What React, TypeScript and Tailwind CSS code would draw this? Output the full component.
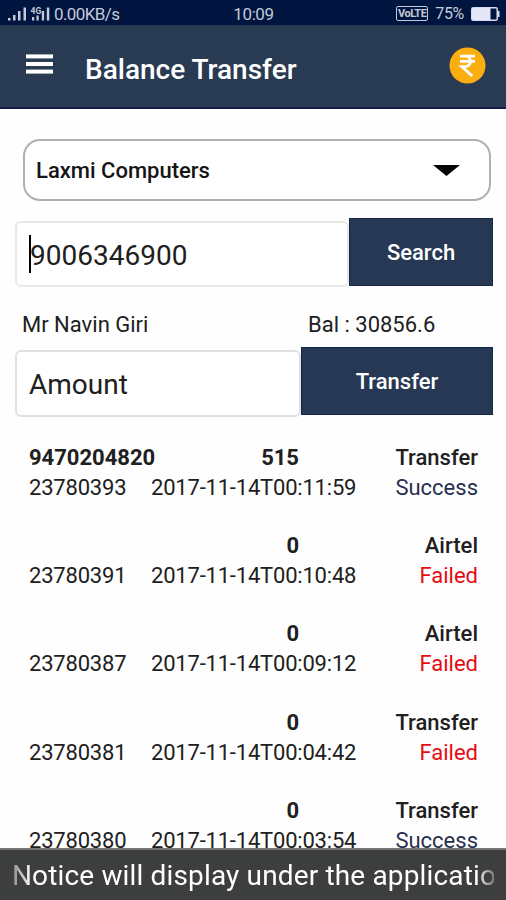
import type { ReactNode } from 'react'

type Entry = {
  id: string
  number?: string
  amount: string
  type: string
  date: string
  status: 'Success' | 'Failed'
}

const ENTRIES: Entry[] = [
  { id: '23780393', number: '9470204820', amount: '515', type: 'Transfer', date: '2017-11-14T00:11:59', status: 'Success' },
  { id: '23780391', amount: '0', type: 'Airtel', date: '2017-11-14T00:10:48', status: 'Failed' },
  { id: '23780387', amount: '0', type: 'Airtel', date: '2017-11-14T00:09:12', status: 'Failed' },
  { id: '23780381', amount: '0', type: 'Transfer', date: '2017-11-14T00:04:42', status: 'Failed' },
  { id: '23780380', amount: '0', type: 'Transfer', date: '2017-11-14T00:03:54', status: 'Success' },
]

function StatusBar() {
  return (
    <div className="grid h-[25px] grid-cols-[1fr_auto_1fr] items-center bg-[#001540] pt-[2px] pr-[6px] pl-[7px] text-[#c3cad8]">
      <div className="flex items-center">
        <svg width="44" height="16" viewBox="0 0 44 16" fill="currentColor">
          <rect x="1" y="12" width="2.5" height="2.5" />
          <rect x="6" y="9" width="2.5" height="5.5" />
          <rect x="11" y="5" width="2.5" height="9.5" />
          <rect x="16.5" y="1.5" width="2.5" height="13" />
          <text x="23.5" y="8" fontSize="8.5" fontWeight="700" fontFamily="Roboto, sans-serif">4G</text>
          <rect x="25" y="11" width="2.2" height="3.5" />
          <rect x="29.5" y="9.5" width="2.2" height="5" />
          <rect x="34.8" y="5" width="2.3" height="9.5" />
          <rect x="39.8" y="1.5" width="2.5" height="13" />
        </svg>
        <span className="ml-[3px] text-[17px] leading-5 tracking-[-0.6px]">0.00KB/s</span>
      </div>
      <span className="text-[17px] leading-5 tracking-[-0.4px]">10:09</span>
      <div className="flex items-center justify-end">
        <span className="flex h-[15px] w-[32px] items-center justify-center rounded-[2px] border border-current text-[11px] leading-none font-bold tracking-[-0.5px]">
          VoLTE
        </span>
        <span className="ml-[7px] text-[16px] leading-5 tracking-[-0.3px]">75%</span>
        <svg className="ml-[7px]" width="29" height="14" viewBox="0 0 29 14" fill="none">
          <rect x="0.75" y="0.75" width="25.5" height="12.5" rx="1.5" stroke="#d5daea" strokeWidth="1.5" />
          <rect x="1" y="1" width="18.5" height="12" fill="#e3e6f5" />
          <path d="M27 4h1.5v6H27z" fill="#d5daea" />
        </svg>
      </div>
    </div>
  )
}

function Header() {
  return (
    <header className="flex h-[84px] items-center border-b-2 border-[#111c47] bg-[#293a53] pr-[20px] pl-[26px] text-white">
      <svg className="mb-[4px]" width="27" height="20" viewBox="0 0 27 20" fill="white">
        <rect y="0.4" width="27" height="4" />
        <rect y="8" width="27" height="4" />
        <rect y="15.6" width="27" height="4" />
      </svg>
      <h1 className="mt-[7px] ml-[32px] text-[28px] leading-8 font-medium">
        Balance Transfer
      </h1>
      <svg className="mb-[2px] ml-auto" width="37" height="37" viewBox="0 0 37 37" fill="none">
        <circle cx="18.5" cy="18.5" r="18" fill="#fbae10" />
        <path
          d="M11 9.2h15M11 14.4h15M11 9.2h5c7.2 0 7.2 10.4 0 10.4h-3.2L23.2 29"
          stroke="white"
          strokeWidth="2.8"
        />
      </svg>
    </header>
  )
}

function ActionButton({ className, children }: { className: string; children: ReactNode }) {
  return (
    <button
      className={`shrink-0 border border-[#15284c] bg-[#263853] text-[22px] font-medium text-white ${className}`}
    >
      {children}
    </button>
  )
}

function EntryRow({ entry }: { entry: Entry }) {
  return (
    <li className="grid grid-cols-[122px_206px_1fr] text-[22px] leading-[30px] whitespace-nowrap">
      <span className="font-bold">{entry.number}</span>
      <span className="pr-[58px] text-right font-bold">{entry.amount}</span>
      <span className="text-right font-medium">{entry.type}</span>
      <span className="tracking-[-0.2px]">{entry.id}</span>
      <span className="tracking-[-0.2px]">{entry.date}</span>
      <span
        className={
          entry.status === 'Failed'
            ? 'text-right text-[#e60d12]'
            : 'text-right text-[#27304f]'
        }
      >
        {entry.status}
      </span>
    </li>
  )
}

export default function App() {
  return (
    <div className="flex h-[900px] w-[506px] flex-col overflow-hidden bg-[#fefefe] font-['Roboto',sans-serif] text-[#202020]">
      <StatusBar />
      <Header />

      <main className="min-h-0 flex-1 overflow-hidden pt-[30px]">
        <div className="mr-[15px] ml-[23px] flex h-[62px] items-center justify-between rounded-[17px] border-2 border-[#b0b0b0] bg-white pr-[29px] pl-[11px]">
          <span className="mt-[1px] text-[22px] font-medium text-[#151515]">Laxmi Computers</span>
          <svg width="27" height="11" viewBox="0 0 27 11">
            <path d="M0 0h27L13.5 11z" fill="#050505" />
          </svg>
        </div>

        <div className="mt-[17px] flex pr-[13px] pl-[15px]">
          <div className="mt-[3px] flex h-[66px] flex-1 items-center rounded-[6px] border-2 border-[#e8e8e8] bg-white pl-[12px]">
            <span className="h-[38px] w-[2px] bg-black" />
            <span className="mt-[3px] -ml-[1px] text-[28px]">9006346900</span>
          </div>
          <ActionButton className="h-[68px] w-[144px]">Search</ActionButton>
        </div>

        <div className="mt-[23px] flex text-[22px] leading-[30px]">
          <span className="w-[308px] pl-[22px]">Mr Navin Giri</span>
          <span>Bal : 30856.6</span>
        </div>

        <div className="mt-[7px] flex pr-[13px] pl-[15px]">
          <div className="mt-[3px] flex h-[67px] flex-1 items-center rounded-[6px] border-2 border-[#e0e0e0] bg-white pl-[12px] text-[28px]">
            <span className="mt-[2px]">Amount</span>
          </div>
          <ActionButton className="h-[68px] w-[192px]">Transfer</ActionButton>
        </div>

        <ul className="mt-[26px] flex flex-col gap-[28.2px] pr-[28px] pl-[29px]">
          {ENTRIES.map((entry) => (
            <EntryRow key={entry.id} entry={entry} />
          ))}
        </ul>
      </main>

      <footer className="h-[52px] shrink-0 border-t-2 border-[#777] bg-[#3d3f3e] px-[12px]">
        <p className="overflow-hidden mask-[linear-gradient(to_right,rgba(0,0,0,0.4),black_20px,black_464px,rgba(0,0,0,0.3))] pt-[1px] text-[28px] leading-[50px] tracking-[0.15px] whitespace-nowrap text-white">
          Notice will display under the applicatio
        </p>
      </footer>
    </div>
  )
}
